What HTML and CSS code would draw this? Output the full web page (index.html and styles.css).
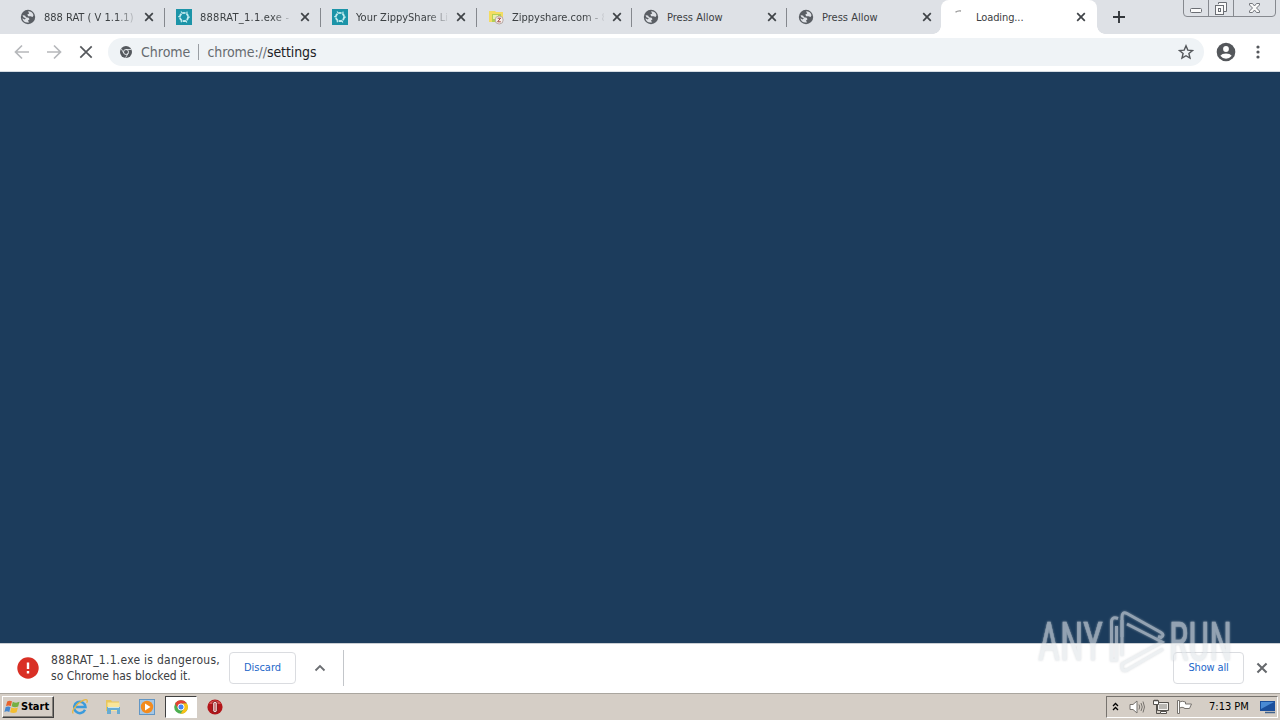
FILE: index.html
```html
<!DOCTYPE html>
<html lang="en">
<head>
    <meta charset="UTF-8">
    <meta name="viewport" content="width=device-width, initial-scale=1.0">
    <title>Loading...</title>
    <link rel="stylesheet" href="styles.css">
</head>
<body>
    <!-- Shared icons -->
    <svg class="defs" width="0" height="0">
        <symbol id="globe" viewBox="0 0 16 16">
            <circle cx="8" cy="8" r="7.2" fill="#5a5e64"/>
            <path d="M2.500 6.500Q5.500 5.800 6 8.200L8.600 8.700 9.500 10.200 8 11.500 9 13.400Q3.500 14.300 2.300 9.300L4.800 10.600 5.800 9.300 3.500 8.200z" fill="#dee1e6"/>
            <path d="M8 2.300Q12.500 2.500 13.500 6.300L12.600 8 10.500 7.200 8.200 7.200 7.300 5.500 9.200 4.500z" fill="#dee1e6"/>
        </symbol>
        <symbol id="close" viewBox="0 0 10 10">
            <path d="M1.2 1.2L8.8 8.8M8.8 1.2L1.2 8.8" stroke="currentColor" stroke-width="1.7" fill="none"/>
        </symbol>
        <symbol id="ring" viewBox="0 0 16 16">
            <rect width="16" height="16" fill="#1c94a8"/>
            <circle cx="8" cy="8" r="4.1" fill="none" stroke="#c5edf0" stroke-width="1.800" stroke-dasharray="3.3 1"/>
            <path d="M5 2.5l1.6 2M11.2 2.6l-.6 2M13.8 8.2h-2M10.8 13.5l-1-2M5 13.2l1-2M2.2 7.6h2" stroke="#c5edf0" stroke-width="1.2"/>
        </symbol>
    </svg>

    <div class="tab-strip">
        <div class="tab">
            <svg class="favicon"><use href="#globe"/></svg>
            <span class="title faded">888 RAT ( V 1.1.1)</span>
            <svg class="close"><use href="#close"/></svg>
        </div>
        <div class="tab">
            <svg class="favicon"><use href="#ring"/></svg>
            <span class="title faded wide">888RAT_1.1.exe -</span>
            <svg class="close"><use href="#close"/></svg>
        </div>
        <div class="tab">
            <svg class="favicon"><use href="#ring"/></svg>
            <span class="title faded">Your ZippyShare Lin</span>
            <svg class="close"><use href="#close"/></svg>
        </div>
        <div class="tab">
            <svg class="favicon" viewBox="0 0 16 16">
                <path d="M1 2h6l1 1h7v10H1z" fill="#f3dc62"/>
                <path d="M4 5h9v8H4z" fill="#b4cf55"/>
                <path d="M5 6h5v4H5z" fill="#e8efb0"/>
                <circle cx="11.2" cy="11" r="4" fill="#f5eeea" stroke="#a99c98" stroke-width=".8"/>
                <path d="M9.6 9.2h3l-3 3.6h3.2" stroke="#a34843" fill="none"/>
            </svg>
            <span class="title faded">Zippyshare.com - 8</span>
            <svg class="close"><use href="#close"/></svg>
        </div>
        <div class="tab">
            <svg class="favicon"><use href="#globe"/></svg>
            <span class="title">Press Allow</span>
            <svg class="close"><use href="#close"/></svg>
        </div>
        <div class="tab">
            <svg class="favicon"><use href="#globe"/></svg>
            <span class="title">Press Allow</span>
            <svg class="close"><use href="#close"/></svg>
        </div>
        <div class="tab active">
            <svg class="favicon" viewBox="0 0 16 16"><path d="M3.500 3.300Q5.500 1.500 9 2" stroke="#9a9a9a" stroke-width="1.4" fill="none"/></svg>
            <span class="title loading">Loading...</span>
            <svg class="close"><use href="#close"/></svg>
        </div>
        <svg class="new-tab" viewBox="0 0 12 12"><path d="M6 0v12M0 6h12" stroke="#33373b" stroke-width="1.9"/></svg>
        <svg class="window-controls" viewBox="0 0 94 18" fill="none">
            <path d="M.5 0V13Q.5 16.5 4 16.5H89Q92.500 16.500 92.500 13V0M25.500 0V16M50.500 0V16" stroke="#86898f"/>
            <rect x="7.500" y="8.500" width="11" height="4" rx="1" fill="#fafafa" stroke="#6b6e74"/>
            <path d="M35.500 4V2.500H43.500V11.500H41" fill="#fafafa" stroke="#6b6e74"/>
            <rect x="32.500" y="5.500" width="8" height="9" fill="#fafafa" stroke="#6b6e74"/>
            <rect x="35.500" y="8.500" width="2" height="3" stroke="#6b6e74"/>
            <path d="M66.500 3.500h3l2 2.500 2-2.500h3v1.500l-3 3 3 3v1.500h-3l-2-2.500-2 2.500h-3v-1.500l3-3-3-3z" fill="#fafafa" stroke="#74777d"/>
        </svg>
    </div>

    <div class="toolbar">
        <svg class="nav" viewBox="0 0 16 16"><path d="M15 8H2M8 1.500L1.500 8 8 14.500" stroke="#b6b8bb" stroke-width="1.700" fill="none"/></svg>
        <svg class="nav" viewBox="0 0 16 16"><path d="M1 8h13M8 1.500L14.500 8 8 14.500" stroke="#b6b8bb" stroke-width="1.700" fill="none"/></svg>
        <svg class="nav" viewBox="0 0 16 16"><path d="M2.300 2.300L13.700 13.700M13.700 2.300L2.300 13.700" stroke="#55585c" stroke-width="1.700" fill="none"/></svg>
        <div class="omnibox">
            <svg class="chrome-mark" viewBox="0 0 12 12">
                <circle cx="6" cy="6" r="6" fill="#55595e"/>
                <circle cx="6" cy="6" r="2.500" fill="#55595e" stroke="#eff3f6" stroke-width=".9"/>
                <path d="M6 3.500h5.400M3.800 7.200L1.200 2.700M8.200 7.200L5.600 11.700" stroke="#eff3f6" stroke-width=".8"/>
            </svg>
            <span class="origin">Chrome</span>
            <span class="divider"></span>
            <span class="url">chrome://<b>settings</b></span>
            <svg class="star" viewBox="0 0 16 16"><path d="M8 1.800L9.800 6.100 14.500 6.500 10.900 9.500 12 14.100 8 11.700 4 14.100 5.100 9.500 1.500 6.500 6.200 6.100z" fill="none" stroke="#54575b" stroke-width="1.400"/></svg>
        </div>
        <svg class="avatar" viewBox="0 0 20 20">
            <circle cx="10" cy="10" r="9.300" fill="#54575b"/>
            <circle cx="10" cy="7" r="2.900" fill="#fff"/>
            <path d="M4.300 13.800Q6 11.400 10 11.400T15.700 13.800Q13.500 16.700 10 16.700T4.300 13.800z" fill="#fff"/>
        </svg>
        <svg class="menu" viewBox="0 0 4 14"><g fill="#54575b"><circle cx="2" cy="2" r="1.600"/><circle cx="2" cy="7" r="1.600"/><circle cx="2" cy="12" r="1.600"/></g></svg>
    </div>

    <div class="page"></div>

    <div class="shelf">
        <svg class="danger" viewBox="0 0 22 22">
            <circle cx="11" cy="11" r="10.700" fill="#d93025"/>
            <path d="M11 5.500v6.500M11 14v2.500" stroke="#fff" stroke-width="2.400"/>
        </svg>
        <div class="message">
            <span class="file">888RAT_1.1.exe is dangerous,</span>
            <span>so Chrome has blocked it.</span>
        </div>
        <div class="button discard"><span>Discard</span></div>
        <svg class="chevron" viewBox="0 0 12 8"><path d="M1.500 6.500L6 2l4.500 4.500" fill="none" stroke="#6b6e72" stroke-width="1.800"/></svg>
        <div class="shelf-divider"></div>
        <div class="button show-all"><span>Show all</span></div>
        <svg class="shelf-close"><use href="#close"/></svg>
    </div>

    <div class="taskbar">
        <div class="start">
            <svg class="flag" viewBox="0 0 16 16">
                <path d="M3.200 2.500Q5.500 1 8 2.300L6.800 7Q4.500 5.800 2 7z" fill="#e8632c"/>
                <path d="M8.800 2.700Q12 4.500 15.500 2.800L14.200 7.500Q11 9 7.600 7.300z" fill="#75b043"/>
                <path d="M1.700 8Q4.200 6.800 6.500 8L5.300 13Q3 11.600.4 12.900z" fill="#4587cf"/>
                <path d="M7.300 8.400Q10.500 10 13.900 8.500L12.600 13.200Q9.500 14.800 6.100 13.200z" fill="#f3be32"/>
            </svg>
            <span>Start</span>
        </div>
        <div class="launch">
            <svg viewBox="0 0 18 18">
                <path d="M14 11.800A5.700 5.700 0 1 1 14.500 9H5" fill="none" stroke="#3b9bdc" stroke-width="2.500"/>
                <path d="M2.300 15.500C-.3 14 5 5.500 12 2.400c5-2 4.700.6 3.700 2.500" fill="none" stroke="#e8b740" stroke-width="1.300"/>
            </svg>
        </div>
        <div class="launch">
            <svg viewBox="0 0 18 18">
                <path d="M2 2h5l1 1.500h7V13H2z" fill="#e8c65c"/>
                <path d="M3.500 4.500h12V13h-12z" fill="#f8e59a"/>
                <path d="M3 9h13v7h-3v-4H7v4H3z" fill="#68acd2"/>
                <path d="M4 9.500h11" stroke="#c9e6f2"/>
            </svg>
        </div>
        <div class="launch">
            <svg viewBox="0 0 18 18">
                <rect x="1.500" y="1.500" width="15" height="15" fill="#a5c7e5" stroke="#6296c4"/>
                <circle cx="9" cy="9" r="6.200" fill="#f38b1e"/>
                <path d="M7 5.500L12.500 9 7 12.500z" fill="#fff"/>
            </svg>
        </div>
        <div class="launch running">
            <svg viewBox="0 0 18 18">
                <circle cx="9" cy="9" r="6.800" fill="#4caf50"/>
                <path d="M3.100 5.600A6.800 6.800 0 0 1 14.900 5.600L9 5.800 6.200 10.900z" fill="#e34133"/>
                <path d="M14.900 5.600A6.800 6.800 0 0 1 8.600 15.800L11.900 10.500 10.500 5.600z" fill="#fbc116"/>
                <circle cx="9" cy="9" r="3.100" fill="#4285f4" stroke="#fff"/>
            </svg>
        </div>
        <div class="launch">
            <svg viewBox="0 0 18 18">
                <circle cx="9" cy="9" r="7.600" fill="#b31519"/>
                <path d="M3 6a7 7 0 0 1 12 0z" fill="#d95351"/>
                <rect x="6.700" y="3.500" width="4.600" height="11" rx="2" fill="#f4e2df" stroke="#7f0d11"/>
                <path d="M9 5v8" stroke="#b9474a" stroke-width="1.200"/>
            </svg>
        </div>
        <div class="tray">
            <svg class="more" viewBox="0 0 7 9"><path d="M1 4l2.500-2.500L6 4M1 8l2.500-2.500L6 8" fill="none" stroke="#000" stroke-width="1.300"/></svg>
            <svg class="sound" viewBox="0 0 16 16" fill="none">
                <path d="M1 5.500h3L8 2v12L4 10.500H1z" fill="#fff" stroke="#77736e"/>
                <path d="M10 5.500Q11.500 8 10 10.500M12 4Q14.500 8 12 12M14 2.500Q17 8 14 13.500" stroke="#77736e"/>
            </svg>
            <svg class="network" viewBox="0 0 16 16">
                <path d="M4.500 3.500h11v8h-11z" fill="#b8b6b2" stroke="#54514d"/>
                <path d="M5.500 4.500h9v6h-9z" fill="none" stroke="#f4f3f0"/>
                <path d="M7.500 12.500h6v2h-6z" fill="#fff" stroke="#54514d"/>
                <path d="M.5 1.500h5v4h-5z" fill="#fff" stroke="#54514d"/>
                <path d="M2 .5v2M4 .5v2M3.500 5.500v9H7" fill="none" stroke="#54514d"/>
            </svg>
            <svg class="action" viewBox="0 0 16 16"><path d="M.5 1.500h2v13h-2zM2.500 3Q5 1.500 8.500 3V5H14.500L12.500 9.500H7.500V9Q5 7.500 2.500 9z" fill="#fff" stroke="#77736e"/></svg>
            <span class="clock">7:13 PM</span>
            <svg class="desktop" viewBox="0 0 16 14">
                <path d="M0 1h15v10H0z" fill="#1b4f9c"/>
                <path d="M1 2h13L1 9z" fill="#4a8ad4"/>
                <path d="M5 12.500h10" stroke="#41638c" stroke-width="1.500"/>
            </svg>
        </div>
    </div>

    <!-- Watermark over the page and the download shelf -->
    <svg class="watermark" viewBox="0 0 200 70">
        <g class="letters">
            <text x="2" y="53.5" textLength="65" lengthAdjust="spacingAndGlyphs">ANY</text>
            <text x="133" y="53.5" textLength="63" lengthAdjust="spacingAndGlyphs">RUN</text>
        </g>
        <g class="mark">
            <path d="M82 12.500Q75 10 75.500 17V54H80.500V20"/>
            <path d="M86 31V11Q86 5 91 7.500L125 26.500Q129 29 125 31.500L122 30.500"/>
            <path d="M86 14V50M91 18L126 36 86 58"/>
            <path d="M127 43L91 64Q86 66 86 61V57"/>
        </g>
    </svg>
</body>
</html>
```

FILE: styles.css
```css
* {
    box-sizing: border-box;
}
body {
    margin: 0;
    width: 1280px;
    height: 720px;
    overflow: hidden;
    display: flex;
    flex-direction: column;
    font-family: "DejaVu Sans Condensed", "DejaVu Sans", sans-serif;
    font-stretch: condensed;
    font-size: 11px;
    color: #3c4043;
    background: #fff;
}
svg {
    display: block;
    flex: none;
}
.defs {
    position: absolute;
}
span {
    white-space: nowrap;
}

/* Tabs */
.tab-strip {
    flex: none;
    height: 34px;
    padding-left: 9px;
    display: flex;
    background: #dee1e6;
}
.tab {
    flex: none;
    width: 155px;
    height: 34px;
    padding-left: 11px;
    display: flex;
    align-items: center;
    background: linear-gradient(#85888e, #85888e) right 8px / 1px 19px no-repeat;
}
.tab:nth-child(-n+3) {
    width: 156px;
}
.tab:nth-child(6) {
    width: 154px;
    background: none;
}
.favicon {
    width: 16px;
    height: 16px;
    margin-right: 8px;
}
.title {
    width: 92px;
    margin-right: 8px;
    padding-top: 1px;
    line-height: 16px;
    color: #3c4043;
}
.wide {
    letter-spacing: 0.25px;
}
.loading {
    letter-spacing: -0.1px;
}
.faded {
    -webkit-mask-image: linear-gradient(to right, #000 72px, transparent 94px);
    mask-image: linear-gradient(to right, #000 72px, transparent 94px);
}
.close {
    width: 10px;
    height: 10px;
    color: #3f4347;
}
.active {
    position: relative;
    width: 156px;
    background: #fff;
    border-radius: 8px 8px 0 0;
}
.active::before,
.active::after {
    content: "";
    position: absolute;
    bottom: 0;
    width: 8px;
    height: 8px;
}
.active::before {
    left: -8px;
    background: radial-gradient(circle at 0 0, transparent 7.500px, #fff 8px);
}
.active::after {
    right: -8px;
    background: radial-gradient(circle at 100% 0, transparent 7.500px, #fff 8px);
}
.new-tab {
    width: 12px;
    height: 12px;
    margin: 11px 0 0 16px;
}
.window-controls {
    width: 94px;
    height: 18px;
    margin-left: auto;
    margin-right: 3px;
}

/* Toolbar */
.toolbar {
    flex: none;
    height: 38px;
    padding: 0 19px 2px 14px;
    display: flex;
    align-items: center;
    border-bottom: 1px solid #d5dce3;
}
.nav {
    width: 16px;
    height: 16px;
    margin-right: 16px;
}
.omnibox {
    width: 1096px;
    height: 28px;
    margin-left: -2px;
    padding: 0 10px 0 12px;
    display: flex;
    align-items: center;
    border-radius: 14px;
    background: #eff3f6;
    font-size: 14px;
}
.chrome-mark {
    width: 12px;
    height: 12px;
    margin-right: 9px;
}
.origin,
.url {
    color: #666b70;
}
.url {
    letter-spacing: -0.08px;
}
.divider {
    width: 1px;
    height: 16px;
    margin: 0 8px;
    background: #9a9ea3;
}
.url b {
    font-weight: normal;
    color: #202124;
}
.star {
    width: 16px;
    height: 16px;
    margin-left: auto;
}
.avatar {
    width: 20px;
    height: 20px;
    margin-left: 12px;
}
.menu {
    width: 4px;
    height: 14px;
    margin-left: 20px;
}

.page {
    flex: 1;
    background: #1c3c5c;
}

/* Download shelf */
.shelf {
    flex: none;
    height: 50px;
    padding: 0 12px 2px 17px;
    display: flex;
    align-items: center;
    border-top: 1px solid #c9ced3;
}
.danger {
    width: 22px;
    height: 22px;
    margin-right: 12px;
}
.message {
    width: 178px;
    display: flex;
    flex-direction: column;
    font-size: 12px;
    line-height: 16px;
    color: #3c4043;
}
.file {
    letter-spacing: 0.26px;
}
.button {
    height: 32px;
    display: flex;
    align-items: center;
    justify-content: center;
    border: 1px solid #dadce0;
    border-radius: 4px;
    color: #2467c9;
}
.discard {
    width: 67px;
}
.chevron {
    width: 12px;
    height: 8px;
    margin: 0 17px 0 18px;
}
.shelf-divider {
    width: 1px;
    height: 36px;
    background: #c3c6ca;
}
.show-all {
    width: 71px;
    margin-left: auto;
    letter-spacing: -0.15px;
}
.shelf-close {
    width: 12px;
    height: 12px;
    margin-left: 12px;
    color: #65686c;
}

/* Taskbar */
.taskbar {
    flex: none;
    height: 27px;
    padding: 1px 0 2px 2px;
    display: flex;
    align-items: center;
    border-top: 1px solid #aaa69f;
    background: #d5cec6;
}
.start {
    width: 52px;
    height: 22px;
    margin-right: 9.500px;
    padding-left: 1px;
    display: flex;
    align-items: center;
    border: 1px solid;
    border-color: #fff #404040 #404040 #fff;
    box-shadow: inset -1px -1px #85817b;
    color: #000;
    font-weight: bold;
}
.start span {
    margin-left: 1px;
}
.flag {
    width: 16px;
    height: 16px;
}
.launch {
    width: 32px;
    height: 22px;
    margin-right: 1.800px;
    display: flex;
    align-items: center;
    justify-content: center;
}
.launch svg {
    width: 18px;
    height: 18px;
}
.running {
    background: #fff;
    border: 1px solid;
    border-color: #404040 #fff #fff #404040;
}
.tray {
    width: 172px;
    height: 22px;
    margin-left: auto;
    margin-right: 2px;
    padding: 0 1px 0 5px;
    display: flex;
    align-items: center;
    border: 1px solid;
    border-color: #77736e #fff #fff #77736e;
    color: #000;
}
.more {
    width: 7px;
    height: 9px;
    margin-right: 10px;
}
.sound,
.network,
.action {
    width: 16px;
    height: 16px;
    margin-right: 8px;
}
.clock {
    margin-left: 8px;
}
.desktop {
    width: 16px;
    height: 14px;
    margin-left: auto;
}

.watermark {
    position: absolute;
    left: 1036px;
    top: 606px;
    width: 200px;
    height: 70px;
    opacity: 0.6;
    filter: drop-shadow(0 0 1px #c0c4c8);
}
.letters {
    font-family: Roboto, sans-serif;
    font-size: 53px;
    fill: #e2e7eb;
    stroke: #e2e7eb;
    stroke-width: 0.5;
}
.mark {
    fill: none;
    stroke: #e2e7eb;
    stroke-width: 3;
}
```
